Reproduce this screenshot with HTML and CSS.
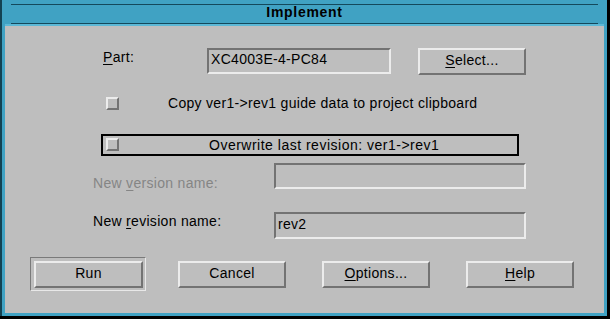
FILE: index.html
```html
<!DOCTYPE html>
<html>
<head>
<meta charset="utf-8">
<link rel="stylesheet" href="styles.css">
</head>
<body>
<div class="window">
  <div class="titlebar"><span class="title">Implement</span></div>
  <div class="title-sep"></div>
  <div class="panel">
    <div class="row row-part">
      <span class="label label-part"><u>P</u>art:</span>
      <div class="field field-part">XC4003E-4-PC84</div>
      <div class="btn btn-select"><u>S</u>elect...</div>
    </div>
    <div class="row row-copy">
      <span class="check"></span>
      <span class="copy-text">Copy ver1-&gt;rev1 guide data to project clipboard</span>
    </div>
    <div class="row row-over">
      <span class="check check-over"></span>
      <span class="over-text">Overwrite last revision: ver1-&gt;rev1</span>
    </div>
    <div class="row row-version">
      <span class="label label-version disabled">New <u>v</u>ersion name:</span>
      <div class="field field-wide"></div>
    </div>
    <div class="row row-revision">
      <span class="label label-revision">New <u>r</u>evision name:</span>
      <div class="field field-wide field-rev">rev2</div>
    </div>
    <div class="row row-buttons">
      <div class="default-ring"><div class="btn btn-run">Run</div></div>
      <div class="btn btn-bottom btn-cancel">Cancel</div>
      <div class="btn btn-bottom btn-gap"><u>O</u>ptions...</div>
      <div class="btn btn-bottom btn-gap"><u>H</u>elp</div>
    </div>
  </div>
</div>
</body>
</html>
```
FILE: styles.css
```css
html, body {
  margin: 0;
  padding: 0;
  background: #000;
  width: 610px;
  height: 319px;
  overflow: hidden;
}

.window {
  box-sizing: border-box;
  width: 607px;
  height: 316px;
  background: #40a2c3;
  padding: 4px 3px 3px 5px;
  display: flex;
  flex-direction: column;
  box-shadow: inset 2px 0 0 #134252;
  font-family: "Liberation Sans", Arial, sans-serif;
  font-size: 14px;
  line-height: 16px;
  letter-spacing: 0.3px;
  color: #000;
}

.titlebar {
  height: 18px;
  border-top: 1px solid #14495c;
  border-bottom: 1px solid #14495c;
  margin-left: 6px;
  margin-right: 6px;
  text-align: center;
}

.title {
  display: block;
  font-weight: bold;
  font-size: 14px;
  letter-spacing: 0.7px;
  line-height: 15px;
}

.title-sep {
  height: 2px;
  background: #5cb8d6;
}

.panel {
  flex: 1;
  background: #bebebe;
  display: flex;
  flex-direction: column;
}

.row {
  display: flex;
  align-items: flex-start;
}

u {
  text-decoration: underline;
  text-underline-offset: 2px;
}

.label {
  display: block;
}

.field {
  box-sizing: border-box;
  height: 26px;
  border-style: solid;
  border-width: 2px;
  border-color: #737373 #ececec #ececec #737373;
  padding: 1px 0 0 1px;
  white-space: nowrap;
}

.btn {
  box-sizing: border-box;
  width: 108px;
  height: 27px;
  border-style: solid;
  border-width: 2px;
  border-color: #ececec #737373 #737373 #ececec;
  text-align: center;
  padding-top: 2px;
  white-space: nowrap;
}

.check {
  box-sizing: border-box;
  width: 13px;
  height: 13px;
  border-style: solid;
  border-width: 2px;
  border-color: #ececec #737373 #737373 #ececec;
  flex: none;
}

/* Part row */
.row-part {
  margin-top: 22px;
  padding-left: 98px;
  height: 27px;
}
.label-part {
  width: 104px;
  margin-top: 1px;
}
.field-part {
  width: 184px;
  padding-left: 2px;
}
.btn-select {
  margin-left: 27px;
}

/* Copy row */
.row-copy {
  margin-top: 20px;
  padding-left: 101px;
  height: 16px;
}
.row-copy .check {
  margin-top: 2px;
}
.copy-text {
  margin-left: 49px;
}

/* Overwrite row */
.row-over {
  box-sizing: border-box;
  margin-top: 23px;
  margin-left: 96px;
  width: 418px;
  height: 22px;
  border: 2px solid #000;
}
.check-over {
  margin-left: 3px;
  margin-top: 2px;
}
.over-text {
  margin-left: 90px;
  line-height: 18px;
  letter-spacing: 0.5px;
}

/* Version / revision rows */
.row-version {
  margin-top: 7px;
  padding-left: 88px;
}
.label-version {
  width: 181px;
  margin-top: 12px;
}
.disabled {
  color: #858585;
}
.field-wide {
  width: 252px;
}
.row-revision {
  margin-top: 21px;
  padding-left: 88px;
}
.label-revision {
  width: 181px;
  margin-top: 1px;
}
.field-rev {
  height: 27px;
  padding-top: 2px;
  padding-left: 2px;
}

/* Buttons row */
.row-buttons {
  margin-top: 18px;
  padding-left: 25px;
}
.default-ring {
  border-style: solid;
  border-width: 1px;
  border-color: #7a7a7a #e8e8e8 #e8e8e8 #7a7a7a;
  padding: 3px 2px 2px 3px;
}
.btn-run {
  width: 109px;
  padding-top: 2px;
}
.btn-bottom {
  margin-top: 4px;
  padding-top: 2px;
}
.btn-cancel {
  margin-left: 32px;
}
.btn-gap {
  margin-left: 36px;
}
```
